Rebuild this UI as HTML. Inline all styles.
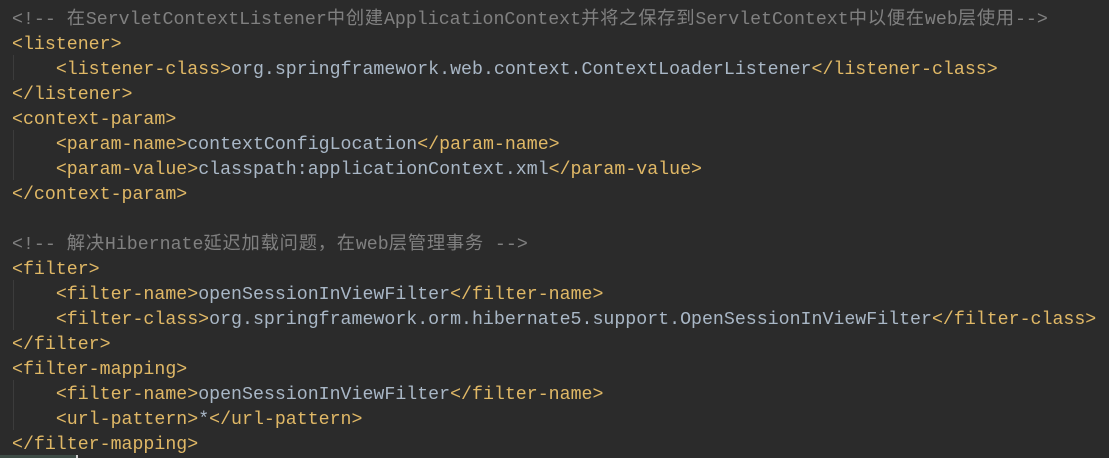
<!DOCTYPE html>
<html><head><meta charset="utf-8"><style>
html,body{margin:0;padding:0;background:#2b2b2b;width:1109px;height:458px;overflow:hidden;position:relative}
pre{margin:0;position:absolute;left:12px;top:8px;font-family:"Liberation Mono","Courier New",monospace;font-size:18.25px;line-height:25px;color:#a9b7c6;white-space:pre}
.t{color:#e0b866}.c{color:#808080}.z{letter-spacing:0.8px;font-family:"Noto Sans CJK SC",sans-serif;line-height:0}
.g{position:absolute;left:13px;width:1px;background:#3c3c3c}
.bar{position:absolute;left:0;top:455px;width:76px;height:3px;background:#3d4b45}
.tick{position:absolute;left:76px;top:455px;width:2px;height:3px;background:#ccc}
</style></head><body>
<div class="g" style="top:55px;height:25px"></div>
<div class="g" style="top:130px;height:50px"></div>
<div class="g" style="top:280px;height:50px"></div>
<div class="g" style="top:380px;height:50px"></div>
<pre><span class="c">&lt;!-- <span class="z">在</span>ServletContextListener<span class="z">中创建</span>ApplicationContext<span class="z">并将之保存到</span>ServletContext<span class="z">中以便在</span>web<span class="z">层使用</span>--&gt;</span>
<span class="t">&lt;listener&gt;</span>
    <span class="t">&lt;listener-class&gt;</span>org.springframework.web.context.ContextLoaderListener<span class="t">&lt;/listener-class&gt;</span>
<span class="t">&lt;/listener&gt;</span>
<span class="t">&lt;context-param&gt;</span>
    <span class="t">&lt;param-name&gt;</span>contextConfigLocation<span class="t">&lt;/param-name&gt;</span>
    <span class="t">&lt;param-value&gt;</span>classpath:applicationContext.xml<span class="t">&lt;/param-value&gt;</span>
<span class="t">&lt;/context-param&gt;</span>

<span class="c">&lt;!-- <span class="z">解决</span>Hibernate<span class="z">延迟加载问题，在</span>web<span class="z">层管理事务</span> --&gt;</span>
<span class="t">&lt;filter&gt;</span>
    <span class="t">&lt;filter-name&gt;</span>openSessionInViewFilter<span class="t">&lt;/filter-name&gt;</span>
    <span class="t">&lt;filter-class&gt;</span>org.springframework.orm.hibernate5.support.OpenSessionInViewFilter<span class="t">&lt;/filter-class&gt;</span>
<span class="t">&lt;/filter&gt;</span>
<span class="t">&lt;filter-mapping&gt;</span>
    <span class="t">&lt;filter-name&gt;</span>openSessionInViewFilter<span class="t">&lt;/filter-name&gt;</span>
    <span class="t">&lt;url-pattern&gt;</span>*<span class="t">&lt;/url-pattern&gt;</span>
<span class="t">&lt;/filter-mapping&gt;</span></pre>
<div class="bar"></div><div class="tick"></div>
</body></html>
